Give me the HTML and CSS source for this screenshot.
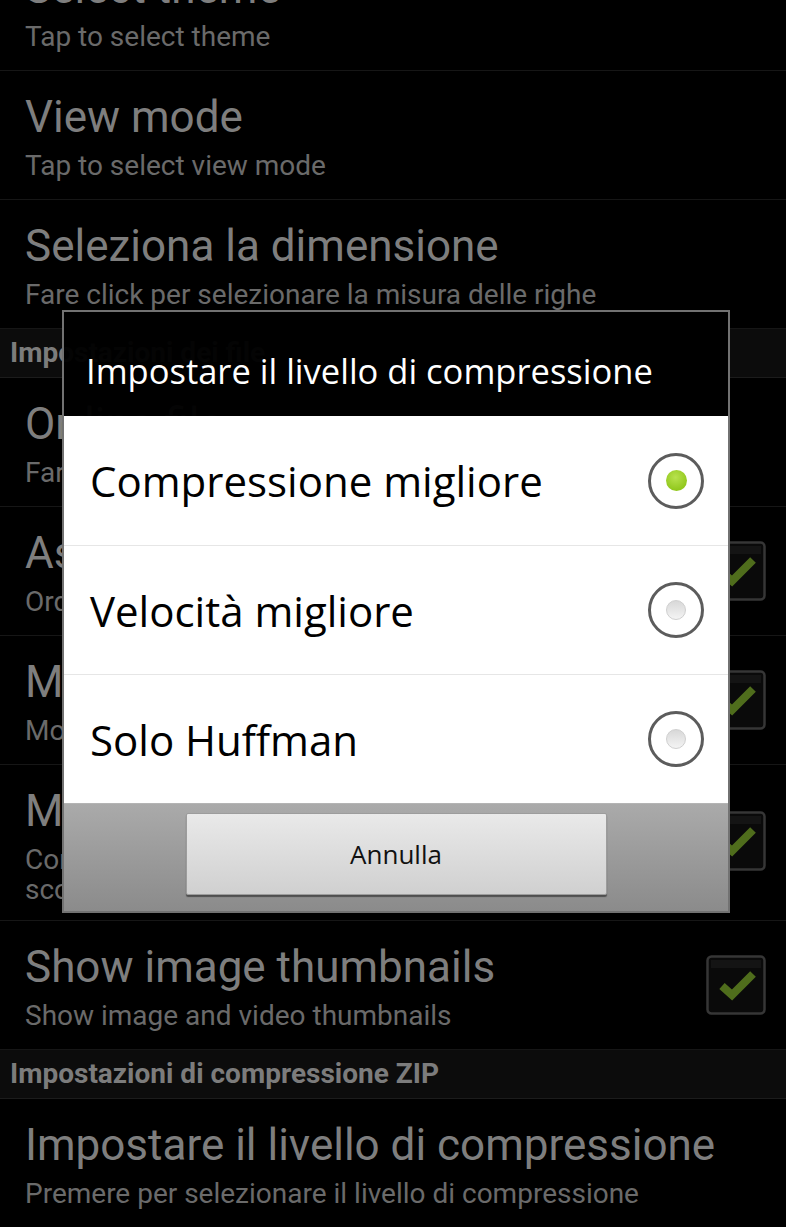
FILE: index.html
```html
<!DOCTYPE html>
<html lang="it">
<head>
    <meta charset="UTF-8">
    <meta name="viewport" content="width=device-width, initial-scale=1.0">
    <title>Impostazioni</title>
    <link rel="stylesheet" href="styles.css">
</head>
<body>
    <!-- Lista delle impostazioni -->
    <div class="prefs">
        <div class="pref">
            <div class="pref-text">
                <div class="pref-title">Select theme</div>
                <div class="pref-summary">Tap to select theme</div>
            </div>
        </div>
        <div class="pref">
            <div class="pref-text">
                <div class="pref-title">View mode</div>
                <div class="pref-summary">Tap to select view mode</div>
            </div>
        </div>
        <div class="pref">
            <div class="pref-text">
                <div class="pref-title">Seleziona la dimensione</div>
                <div class="pref-summary">Fare click per selezionare la misura delle righe</div>
            </div>
        </div>

        <div class="pref-header">Impostazioni dei file</div>

        <div class="pref">
            <div class="pref-text">
                <div class="pref-title">Ordina file</div>
                <div class="pref-summary">Fare click per ordinare</div>
            </div>
        </div>
        <div class="pref">
            <div class="pref-text">
                <div class="pref-title">Ascendente</div>
                <div class="pref-summary">Ordine ascendente</div>
            </div>
            <svg class="check" viewBox="0 0 60 60"><rect x="1.5" y="1.5" width="57" height="57" rx="4" class="check-box"/><rect x="5" y="5" width="50" height="8" class="check-top"/><polyline points="16,31 26,40 47,19" class="check-mark"/></svg>
        </div>
        <div class="pref">
            <div class="pref-text">
                <div class="pref-title">Mostra nascosti</div>
                <div class="pref-summary">Mostra i file nascosti</div>
            </div>
            <svg class="check" viewBox="0 0 60 60"><rect x="1.5" y="1.5" width="57" height="57" rx="4" class="check-box"/><rect x="5" y="5" width="50" height="8" class="check-top"/><polyline points="16,31 26,40 47,19" class="check-mark"/></svg>
        </div>
        <div class="pref pref-tall">
            <div class="pref-text">
                <div class="pref-title">Mostra percorso</div>
                <div class="pref-summary">Conferma prima di uscire<br>scorrendo la lista</div>
            </div>
            <svg class="check" viewBox="0 0 60 60"><rect x="1.5" y="1.5" width="57" height="57" rx="4" class="check-box"/><rect x="5" y="5" width="50" height="8" class="check-top"/><polyline points="16,31 26,40 47,19" class="check-mark"/></svg>
        </div>
        <div class="pref">
            <div class="pref-text">
                <div class="pref-title">Show image thumbnails</div>
                <div class="pref-summary">Show image and video thumbnails</div>
            </div>
            <svg class="check" viewBox="0 0 60 60"><rect x="1.5" y="1.5" width="57" height="57" rx="4" class="check-box"/><rect x="5" y="5" width="50" height="8" class="check-top"/><polyline points="16,31 26,40 47,19" class="check-mark"/></svg>
        </div>

        <div class="pref-header">Impostazioni di compressione ZIP</div>

        <div class="pref">
            <div class="pref-text">
                <div class="pref-title">Impostare il livello di compressione</div>
                <div class="pref-summary">Premere per selezionare il livello di compressione</div>
            </div>
        </div>
    </div>

    <!-- Finestra di dialogo -->
    <div class="dialog">
        <div class="dialog-title">Impostare il livello di compressione</div>
        <div class="dialog-list">
            <div class="dialog-item">
                <span>Compressione migliore</span>
                <span class="radio checked"></span>
            </div>
            <div class="dialog-item">
                <span>Velocità migliore</span>
                <span class="radio"></span>
            </div>
            <div class="dialog-item">
                <span>Solo Huffman</span>
                <span class="radio"></span>
            </div>
        </div>
        <div class="dialog-buttons">
            <button class="dialog-btn">Annulla</button>
        </div>
    </div>
</body>
</html>
```

FILE: styles.css
```css
* {
    margin: 0;
    padding: 0;
    box-sizing: border-box;
}

body {
    background-color: #000;
    font-family: Roboto, "Liberation Sans", sans-serif;
    width: 786px;
    height: 1227px;
    overflow: hidden;
    position: relative;
}

/* Lista impostazioni */
.prefs {
    margin-top: -58px;
}

.pref {
    display: flex;
    align-items: flex-start;
    min-height: 129px;
    padding: 12px 20px 12px 25px;
    border-bottom: 1px solid #161616;
}

.pref-tall {
    padding-bottom: 15px;
}

.pref-text {
    flex: 1;
    white-space: nowrap;
}

.pref-title {
    font-size: 44px;
    line-height: 68px;
    color: #7e7e7e;
}

.pref-summary {
    font-size: 28px;
    line-height: 30px;
    color: #6a6a6a;
}

.check {
    align-self: center;
    width: 60px;
    height: 60px;
    flex-shrink: 0;
}

.check-box {
    fill: #0a0a0a;
    stroke: #363636;
    stroke-width: 2.5;
}

.check-top {
    fill: #141414;
}

.check-mark {
    fill: none;
    stroke: #4f6d1c;
    stroke-width: 8;
}

.pref-header {
    height: 49px;
    padding-left: 10px;
    background: #0c0c0c;
    border-bottom: 1px solid #1c1c1c;
    font-size: 28px;
    font-weight: bold;
    line-height: 48px;
    color: #7c7c7c;
}

/* Dialogo */
.dialog {
    position: absolute;
    left: 62px;
    top: 310px;
    width: 668px;
    border: 2px solid #727272;
    font-family: "Open Sans", "Noto Sans", sans-serif;
}

.dialog-title {
    height: 104px;
    padding: 12px 0 0 22px;
    display: flex;
    align-items: center;
    background: rgba(0, 0, 0, 0.97);
    color: #fff;
    font-size: 34.5px;
}

.dialog-list {
    background: #fff;
}

.dialog-item {
    height: 129px;
    display: flex;
    align-items: center;
    justify-content: space-between;
    padding: 0 24px 0 26px;
    border-top: 1px solid #e6e6e6;
    font-size: 42px;
    color: #000;
}

.dialog-item:first-child {
    border-top: none;
}

.radio {
    width: 56px;
    height: 56px;
    border: 3px solid #5c5c5c;
    border-radius: 50%;
    display: flex;
    align-items: center;
    justify-content: center;
}

.radio::after {
    content: "";
    width: 18px;
    height: 18px;
    border-radius: 50%;
    border: 1px solid #cfcfcf;
    background: linear-gradient(#d8d8d8, #f4f4f4);
}

.radio.checked::after {
    width: 21px;
    height: 21px;
    border: none;
    background: radial-gradient(circle at 45% 35%, #b8e24e, #92c81e 70%);
}

.dialog-buttons {
    height: 108px;
    padding-top: 9px;
    display: flex;
    justify-content: center;
    align-items: flex-start;
    background: linear-gradient(#aaaaaa, #8b8b8b);
    border-top: 1px solid #b4b4b4;
}

.dialog-btn {
    width: 421px;
    height: 82px;
    border: 1px solid #9c9c9c;
    border-radius: 2px;
    background: linear-gradient(#e9e9e9, #d0d0d0);
    box-shadow: 0 2px 1px rgba(0, 0, 0, 0.45);
    font-family: "Open Sans", "Noto Sans", sans-serif;
    font-size: 26px;
    color: #111;
}
```
